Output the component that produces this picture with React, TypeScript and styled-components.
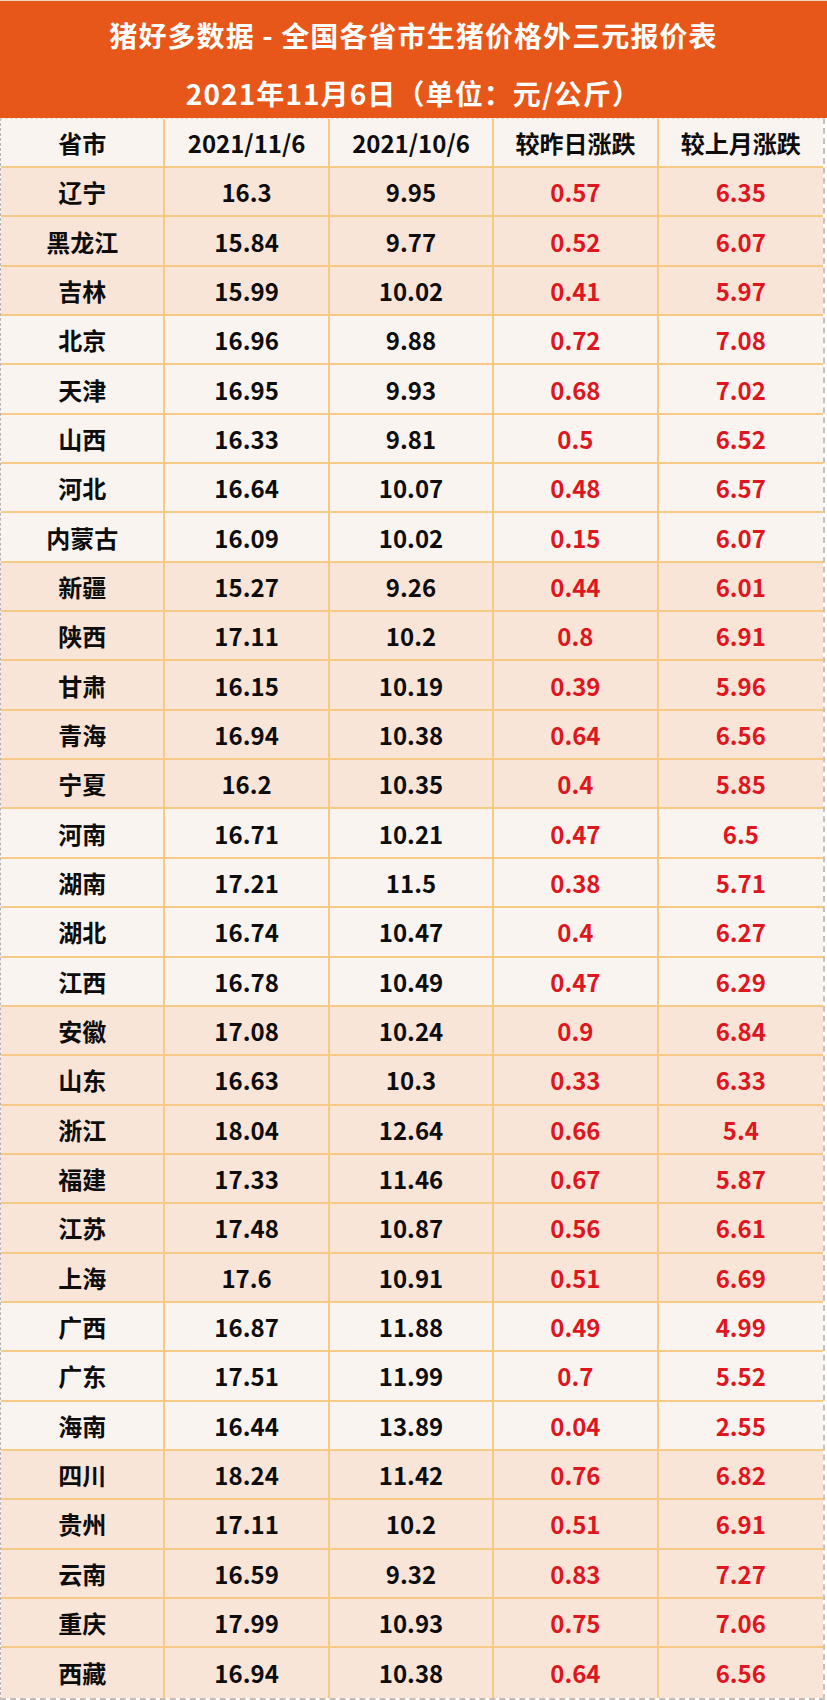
import styled, { createGlobalStyle } from 'styled-components';

const GlobalStyle = createGlobalStyle`
  html, body {
    margin: 0;
    padding: 0;
    background: #ffffff;
  }
  body {
    font-family: 'Noto Sans CJK SC', 'Noto Sans', sans-serif;
  }
`;

type Row = [string, string, string, string, string];

const rows: Row[] = [
  ['辽宁', '16.3', '9.95', '0.57', '6.35'],
  ['黑龙江', '15.84', '9.77', '0.52', '6.07'],
  ['吉林', '15.99', '10.02', '0.41', '5.97'],
  ['北京', '16.96', '9.88', '0.72', '7.08'],
  ['天津', '16.95', '9.93', '0.68', '7.02'],
  ['山西', '16.33', '9.81', '0.5', '6.52'],
  ['河北', '16.64', '10.07', '0.48', '6.57'],
  ['内蒙古', '16.09', '10.02', '0.15', '6.07'],
  ['新疆', '15.27', '9.26', '0.44', '6.01'],
  ['陕西', '17.11', '10.2', '0.8', '6.91'],
  ['甘肃', '16.15', '10.19', '0.39', '5.96'],
  ['青海', '16.94', '10.38', '0.64', '6.56'],
  ['宁夏', '16.2', '10.35', '0.4', '5.85'],
  ['河南', '16.71', '10.21', '0.47', '6.5'],
  ['湖南', '17.21', '11.5', '0.38', '5.71'],
  ['湖北', '16.74', '10.47', '0.4', '6.27'],
  ['江西', '16.78', '10.49', '0.47', '6.29'],
  ['安徽', '17.08', '10.24', '0.9', '6.84'],
  ['山东', '16.63', '10.3', '0.33', '6.33'],
  ['浙江', '18.04', '12.64', '0.66', '5.4'],
  ['福建', '17.33', '11.46', '0.67', '5.87'],
  ['江苏', '17.48', '10.87', '0.56', '6.61'],
  ['上海', '17.6', '10.91', '0.51', '6.69'],
  ['广西', '16.87', '11.88', '0.49', '4.99'],
  ['广东', '17.51', '11.99', '0.7', '5.52'],
  ['海南', '16.44', '13.89', '0.04', '2.55'],
  ['四川', '18.24', '11.42', '0.76', '6.82'],
  ['贵州', '17.11', '10.2', '0.51', '6.91'],
  ['云南', '16.59', '9.32', '0.83', '7.27'],
  ['重庆', '17.99', '10.93', '0.75', '7.06'],
  ['西藏', '16.94', '10.38', '0.64', '6.56'],
];

// which rows get the light band, the rest are peach
const lightRows = new Set([3, 4, 5, 6, 7, 13, 14, 15, 16, 23, 24, 25]);

const Page = styled.div`
  width: 827px;
  height: 1700px;
  display: flex;
  flex-direction: column;
  overflow: hidden;
`;

const Banner = styled.header`
  height: 118px;
  background: #e75719;
  color: #fff;
  display: flex;
  flex-direction: column;
  align-items: center;
  justify-content: flex-start;
  padding-top: 10px;
  gap: 10px;
  font-weight: 700;
  font-size: 28px;
  line-height: 48px;
  letter-spacing: 1.1px;
  border-top: 1px solid #f3d7c6;
  box-sizing: border-box;
`;

const BannerLine = styled.div`
  height: 48px;
`;

const Table = styled.div`
  width: 825px;
  display: grid;
  grid-template-columns: repeat(5, 1fr);
  border-left: 1px dashed #b9b2ad;
  border-right: 2px dashed #c8c2be;
  border-bottom: 2px dashed #c4bdb8;
  border-top: 1px dashed #f2d5c3;
  box-sizing: border-box;
`;

const Cell = styled.div<{ $tone: 'head' | 'light' | 'peach'; $red?: boolean; $last?: boolean; $lastRow?: boolean }>`
  height: ${(p) => (p.$tone === 'head' ? '49px' : '49.35px')};
  box-sizing: border-box;
  display: flex;
  align-items: center;
  justify-content: center;
  font-weight: 700;
  font-size: 24px;
  color: ${(p) => (p.$red ? '#de1620' : '#0d0d0d')};
  background: ${(p) =>
    p.$tone === 'head' ? '#f9f4ef' : p.$tone === 'light' ? '#faf4f0' : '#f9e4d8'};
  border-right: ${(p) => (p.$last ? 'none' : '2px solid #f6ca85')};
  border-bottom: ${(p) => (p.$lastRow ? 'none' : '2px solid #f6ca85')};
`;

const headers = ['省市', '2021/11/6', '2021/10/6', '较昨日涨跌', '较上月涨跌'];

export default function App() {
  return (
    <Page>
      <GlobalStyle />
      <Banner>
        <BannerLine>猪好多数据 - 全国各省市生猪价格外三元报价表</BannerLine>
        <BannerLine>2021年11月6日（单位：元/公斤）</BannerLine>
      </Banner>
      <Table>
        {headers.map((h, i) => (
          <Cell key={h} $tone="head" $last={i === 4}>
            {h}
          </Cell>
        ))}
        {rows.map((r, ri) =>
          r.map((v, ci) => (
            <Cell
              key={`${ri}-${ci}`}
              $tone={lightRows.has(ri) ? 'light' : 'peach'}
              $red={ci >= 3}
              $last={ci === 4}
              $lastRow={ri === rows.length - 1}
            >
              {v}
            </Cell>
          ))
        )}
      </Table>
    </Page>
  );
}
